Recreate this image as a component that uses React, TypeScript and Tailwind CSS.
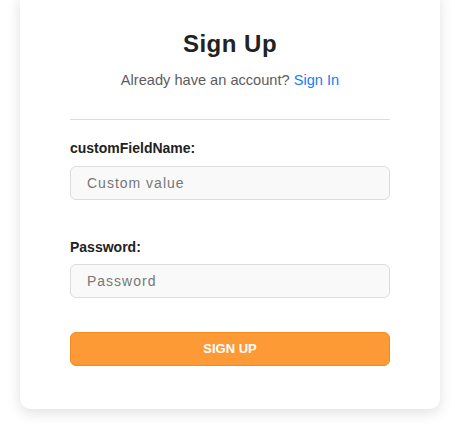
export default function App() {
  return (
    <div className="min-h-[437px] w-full bg-white font-['Liberation_Sans',Arial,sans-serif]">
      <div className="ml-5 -mt-[10px] w-[420px] rounded-[10px] bg-white px-[50px] pb-[43px] pt-[40px] shadow-[0_4px_14px_rgba(0,0,0,0.12)]">
        {/* Header */}
        <h1 className="text-center text-[24px] font-bold leading-[28px] tracking-[0.5px] text-[#222]">
          Sign Up
        </h1>
        <p className="mt-[14px] text-center text-[14.6px] leading-[17px] text-[#5c5c5c]">
          Already have an account?{" "}
          <a href="#" className="text-[#1a7cf5]">
            Sign In
          </a>
        </p>

        <div className="mt-[30px] h-px bg-[#ddd]" />

        {/* Fields */}
        <form className="mt-[20px] flex flex-col">
          <label className="text-[14px] font-bold leading-[17px] text-[#222]">
            customFieldName:
          </label>
          <input
            type="text"
            placeholder="Custom value"
            className="mt-[9px] h-[34px] w-full rounded-[6px] border border-[#ddd] bg-[#f9f9f9] px-4 text-[14px] tracking-[1px] text-[#333] outline-none placeholder:text-[#777]"
          />

          <label className="mt-[39px] text-[14px] font-bold leading-[17px] text-[#222]">
            Password:
          </label>
          <input
            type="password"
            placeholder="Password"
            className="mt-[8px] h-[34px] w-full rounded-[6px] border border-[#ddd] bg-[#f9f9f9] px-4 text-[14px] tracking-[1px] text-[#333] outline-none placeholder:text-[#777]"
          />

          <button
            type="button"
            className="mt-[34px] h-[34px] w-full rounded-[6px] border border-[#f08c25] bg-[#fd9a35] text-[13px] font-bold text-white"
          >
            SIGN UP
          </button>
        </form>
      </div>
    </div>
  );
}
